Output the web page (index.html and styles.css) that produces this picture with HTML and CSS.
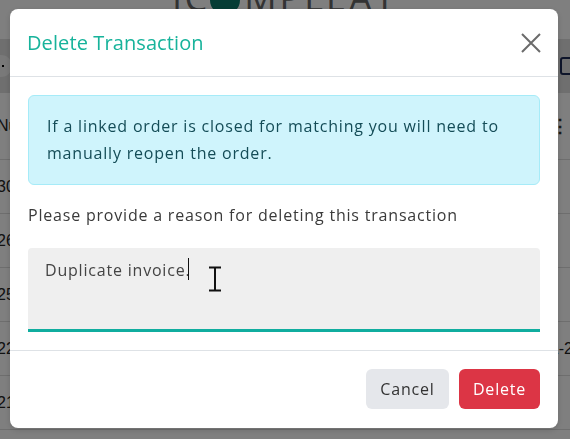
FILE: index.html
```html
<!DOCTYPE html>
<html lang="en">
<head>
    <meta charset="UTF-8">
    <meta name="viewport" content="width=device-width, initial-scale=1.0">
    <title>Delete Transaction</title>
    <link rel="stylesheet" href="styles.css">
</head>
<body>

<div class="page">
    <header class="brand">
        <span class="brand-text">iC</span><span class="brand-o"></span><span class="brand-text">MPLEAT</span>
    </header>
    <div class="toolbar">
        <span class="search-box"><span class="search-mark"></span></span>
        <span class="filter-btn"></span>
    </div>
    <table class="list">
        <tr class="list-head"><td>Nu</td><td class="list-mid"></td><td class="list-end"><span class="dots">&#8942;</span></td></tr>
        <tr><td>30</td><td class="list-mid"></td><td class="list-end"></td></tr>
        <tr><td>26</td><td class="list-mid"></td><td class="list-end"></td></tr>
        <tr><td>25</td><td class="list-mid"></td><td class="list-end"></td></tr>
        <tr><td>22</td><td class="list-mid"></td><td class="list-end">1-2</td></tr>
        <tr><td>21</td><td class="list-mid"></td><td class="list-end"></td></tr>
    </table>
</div>

<div class="backdrop"></div>

<div class="modal-wrap">
    <div class="modal">
        <div class="modal-header">
            <h5 class="modal-title">Delete Transaction</h5>
            <button class="btn-close" aria-label="Close">
                <svg width="20" height="20" viewBox="0 0 20 20"><path d="M1 1 L19 19 M19 1 L1 19" stroke="#6b6b6b" stroke-width="2" fill="none"/></svg>
            </button>
        </div>
        <div class="modal-body">
            <div class="alert-info">If a linked order is closed for matching you will need to manually reopen the order.</div>
            <p class="reason-label">Please provide a reason for deleting this transaction</p>
            <div class="reason-field">
                <textarea class="reason-input">Duplicate invoice.</textarea>
                <span class="caret"></span>
                <svg class="ibeam" width="14" height="26" viewBox="0 0 14 26"><path d="M1 1.5 H13 M1 24.5 H13 M7 1.5 V24.5" stroke="#111" stroke-width="2" fill="none"/></svg>
            </div>
        </div>
        <div class="modal-footer">
            <button class="btn btn-cancel">Cancel</button>
            <button class="btn btn-delete">Delete</button>
        </div>
    </div>
</div>

</body>
</html>
```
FILE: styles.css
```css
body {
    margin: 0;
    font-family: "Open Sans", Arial, sans-serif;
    background: #ffffff;
    color: #333;
    overflow: hidden;
}
.page {
    height: 439px;
    background: #ffffff;
}
.brand {
    height: 39px;
    display: flex;
    justify-content: center;
    align-items: flex-end;
    overflow: hidden;
}
.brand-text {
    font-size: 36px;
    line-height: 1;
    letter-spacing: 3px;
    color: #666;
    margin-bottom: 23px;
}
.brand-o {
    width: 30px;
    height: 30px;
    border-radius: 50%;
    background: #0b7a6a;
    margin: 0 4px 24px 0;
}
.toolbar {
    height: 54px;
    background: #dedede;
    display: flex;
    justify-content: space-between;
    align-items: center;
}
.search-box {
    width: 30px;
    height: 22px;
    margin-left: -18px;
    border-radius: 11px;
    background: #f2f2f2;
    display: flex;
    justify-content: flex-end;
    align-items: center;
}
.search-mark {
    width: 2px;
    height: 2px;
    background: #000;
    margin-right: 8px;
}
.filter-btn {
    width: 14px;
    height: 14px;
    border: 2px solid #1c2a55;
    border-radius: 3px;
    margin-right: -8px;
}
.list {
    width: 576px;
    margin-left: -3px;
    border-collapse: collapse;
    font-family: Arial, sans-serif;
    font-size: 16px;
    color: #222;
}
.list td {
    height: 53px;
    border-bottom: 1px solid #dcdcdc;
    padding: 0;
}
.list .list-head td {
    height: 66px;
}
.list-end {
    text-align: right;
    width: 40px;
}
.dots {
    font-size: 18px;
    font-weight: 700;
    color: #333;
    margin-right: 4px;
}

.backdrop {
    position: fixed;
    inset: 0;
    background: rgba(0, 0, 0, 0.5);
}
.modal-wrap {
    position: fixed;
    inset: 0;
    padding: 9px 0 0 10px;
}
.modal {
    width: 548px;
    background: #fff;
    border-radius: 8px;
    box-shadow: 0 2px 6px rgba(0, 0, 0, 0.15);
    letter-spacing: 0.8px;
}
.modal-header {
    display: flex;
    justify-content: space-between;
    align-items: center;
    padding: 18px 17px 18px 17px;
    border-bottom: 1px solid #dee2e6;
}
.modal-title {
    margin: 0;
    font-size: 20px;
    line-height: 31px;
    font-weight: 400;
    letter-spacing: 0.1px;
    color: #17b39b;
}
.btn-close {
    background: none;
    border: none;
    padding: 0;
    width: 20px;
    height: 20px;
    cursor: pointer;
}
.modal-body {
    padding: 18px;
    border-bottom: 1px solid #dee2e6;
}
.alert-info {
    background: #cff4fc;
    border: 1px solid #a6ebf8;
    border-radius: 6px;
    padding: 17px 18px;
    font-size: 16px;
    line-height: 27px;
    color: #144c57;
}
.reason-label {
    margin: 17px 0 19px;
    font-size: 16px;
    line-height: 27px;
    color: #3a3a3a;
}
.reason-field {
    position: relative;
}
.reason-input {
    display: block;
    width: 100%;
    height: 84px;
    box-sizing: border-box;
    background: #efefef;
    border: none;
    border-bottom: 3px solid #10ad9f;
    border-radius: 4px 4px 0 0;
    padding: 10px 17px;
    font-family: inherit;
    font-size: 16px;
    line-height: 24px;
    letter-spacing: 0.8px;
    color: #444;
    resize: none;
    outline: none;
}
.caret {
    position: absolute;
    left: 160px;
    top: 10px;
    width: 1px;
    height: 22px;
    background: #111;
}
.ibeam {
    position: absolute;
    left: 180px;
    top: 18px;
}
.modal-footer {
    display: flex;
    justify-content: flex-end;
    gap: 10px;
    padding: 18px 18px 19px;
}
.btn {
    height: 40px;
    border: none;
    border-radius: 6px;
    font-family: inherit;
    font-size: 16px;
    letter-spacing: 0.8px;
    padding: 0;
    cursor: pointer;
}
.btn-cancel {
    width: 83px;
    background: #e5e7eb;
    color: #333;
}
.btn-delete {
    width: 81px;
    background: #dc3545;
    color: #fff;
}
```
